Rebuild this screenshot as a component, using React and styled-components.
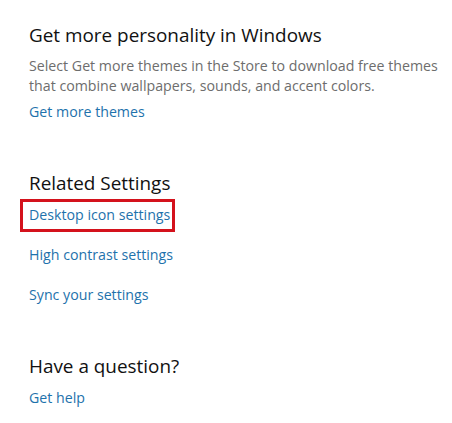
import React from 'react';
import styled, { createGlobalStyle } from 'styled-components';

const GlobalStyle = createGlobalStyle`
  html, body {
    margin: 0;
    padding: 0;
    background: #ffffff;
  }
  body {
    font-family: 'Open Sans', 'Noto Sans', sans-serif;
  }
`;

const Page = styled.div`
  width: 452px;
  height: 423px;
  box-sizing: border-box;
  padding: 21px 8px 0 29px;
  background: #ffffff;
  overflow: hidden;
`;

const Section = styled.section`
  display: flex;
  flex-direction: column;
  align-items: flex-start;
  margin-top: ${(p) => p.gap || 0}px;
`;

const Heading = styled.h2`
  margin: 0;
  font-size: 18.9px;
  line-height: 28px;
  font-weight: 400;
  color: #111111;
`;

const Body = styled.p`
  margin: 7px 0 0;
  font-size: 14.2px;
  line-height: 20px;
  color: #6d6d6d;
`;

const LinkList = styled.div`
  display: flex;
  flex-direction: column;
  align-items: flex-start;
  margin-top: ${(p) => p.offset || 0}px;
`;

const LinkRow = styled.a`
  display: block;
  padding: ${(p) => (p.tight ? '0' : '10px 0')};
  font-size: 14.2px;
  line-height: 20px;
  color: #1e72ac;
  text-decoration: none;
  cursor: pointer;
`;

const LinkText = styled.span`
  position: relative;
  display: inline-block;

  ${(p) =>
    p.highlighted &&
    `
    &::after {
      content: '';
      position: absolute;
      top: -6px;
      bottom: -7px;
      left: -9px;
      right: -5px;
      border: 3px solid #d4121c;
    }
  `}
`;

export default function App() {
  return (
    <>
      <GlobalStyle />
      <Page>
        <Section>
          <Heading>Get more personality in Windows</Heading>
          <Body>
            Select Get more themes in the Store to download free themes that
            combine wallpapers, sounds, and accent colors.
          </Body>
          <LinkList offset={6}>
            <LinkRow tight>
              <LinkText>Get more themes</LinkText>
            </LinkRow>
          </LinkList>
        </Section>

        <Section gap={47}>
          <Heading>Related Settings</Heading>
          <LinkList offset={-2}>
            <LinkRow>
              <LinkText highlighted>Desktop icon settings</LinkText>
            </LinkRow>
            <LinkRow>
              <LinkText>High contrast settings</LinkText>
            </LinkRow>
            <LinkRow>
              <LinkText>Sync your settings</LinkText>
            </LinkRow>
          </LinkList>
        </Section>

        <Section gap={37}>
          <Heading>Have a question?</Heading>
          <LinkList offset={8}>
            <LinkRow tight>
              <LinkText>Get help</LinkText>
            </LinkRow>
          </LinkList>
        </Section>
      </Page>
    </>
  );
}
